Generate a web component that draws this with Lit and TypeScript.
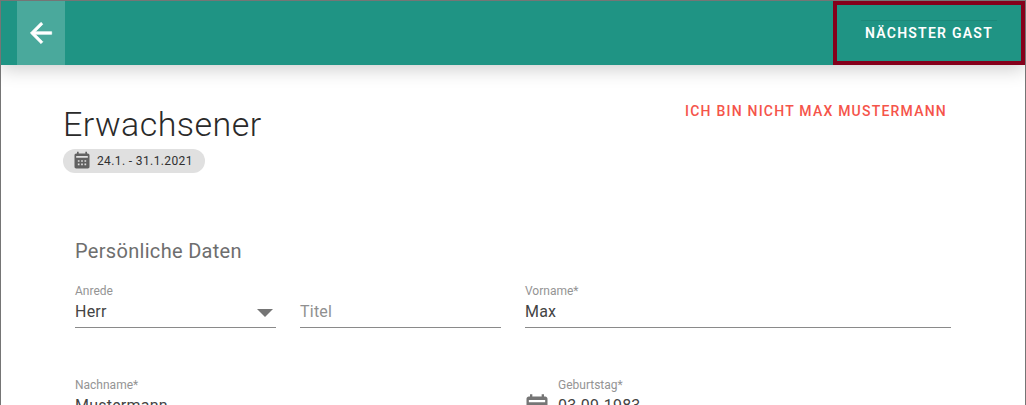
import { LitElement, html, css } from "lit";
import { customElement } from "lit/decorators.js";

@customElement("app-root")
export class AppRoot extends LitElement {
  static styles = css`
    :host { display: block; height: 405px; overflow: hidden; font-family: Roboto, sans-serif; background: #fff; }
    .frame { box-sizing: border-box; height: 405px; border: 1px solid #757575; border-bottom: none; overflow: hidden; }
    .bar { display: flex; justify-content: space-between; height: 64px; background: #1f9484; box-shadow: 0 4px 18px rgba(0,0,0,.2); padding-left: 16px; }
    .back { width: 48px; background: #4aa99c; display: flex; align-items: center; justify-content: center; }
    .next { box-sizing: border-box; width: 192px; height: 64px; border: 4px solid #85001b; display: flex; align-items: center; justify-content: center; color: #fff; font-size: 14px; font-weight: 600; letter-spacing: 1.25px; }
    .next span { border-top: 1px solid rgba(0,0,0,.08); padding: 2px 4px 3px; line-height: 20px; }
    .main { padding: 0 75px 0 62px; }
    .head { display: flex; justify-content: space-between; align-items: flex-start; padding-top: 36px; }
    h1 { margin: 0; font-size: 34px; font-weight: 350; line-height: 46px; color: #2a2a2a; letter-spacing: .45px; }
    .notme { color: #f5544a; font-size: 14px; font-weight: 470; letter-spacing: 1.22px; line-height: 20px; margin: 0 3px 0 0; }
    .chip { display: inline-flex; align-items: center; gap: 5px; height: 24px; padding: 0 12px 0 9px; border-radius: 12px; background: #e0e0e0; font-size: 12px; font-weight: 380; letter-spacing: .38px; color: #303030; margin-top: 2px; }
    .chip svg { width: 20px; height: 20px; fill: #616161; }
    .section { padding: 0 12px; margin-top: 63px; }
    h2 { margin: 0; font-size: 20px; font-weight: 400; line-height: 26px; color: #6e6e6e; letter-spacing: .31px; }
    .grid { display: grid; grid-template-columns: 201px 201px 426px; column-gap: 24px; margin-top: 19px; }
    .grid2 { display: grid; grid-template-columns: 426px 426px; column-gap: 24px; margin-top: 49px; }
    .field { border-bottom: 1px solid #8a8a8a; height: 44px; }
    .label { font-size: 12px; line-height: 16px; color: #949494; }
    .val { font-size: 16px; font-weight: 380; line-height: 24px; margin-top: 1px; color: #444; letter-spacing: .22px; }
    .ph { color: #909090; margin-top: 0; padding-top: 17px; }
    .sel { display: flex; justify-content: space-between; align-items: center; }
    .arrow { width: 0; height: 0; border-left: 8px solid transparent; border-right: 8px solid transparent; border-top: 8px solid #757575; margin: 2px 3px 0 0; }
    .date { display: flex; gap: 7px; align-items: flex-start; }
    .date svg { width: 28px; height: 28px; fill: #757575; margin: 16px 0 0 -2px; flex: none; }
    .date .field { flex: 1; }
  `;

  private cal() {
    return html`<svg viewBox="0 0 24 24"><path d="M19 3h-1V1h-2v2H8V1H6v2H5c-1.1 0-2 .9-2 2v14c0 1.1.9 2 2 2h14c1.1 0 2-.9 2-2V5c0-1.1-.9-2-2-2zM9 17H7v-2h2v2zm0-4H7v-2h2v2zm4 4h-2v-2h2v2zm0-4h-2v-2h2v2zm4 4h-2v-2h2v2zm0-4h-2v-2h2v2zm2-5H5V6h14v2z"/></svg>`;
  }

  render() {
    return html`<div class="frame">
      <div class="bar">
        <div class="back"><svg width="32" height="32" viewBox="0 0 24 24" fill="#fff"><path d="M20 11H7.83l5.59-5.59L12 4l-8 8 8 8 1.41-1.41L7.83 13H20z" stroke="#fff" stroke-width=".5"/></svg></div>
        <div class="next"><span>NÄCHSTER GAST</span></div>
      </div>
      <div class="main">
        <div class="head">
          <div>
            <h1>Erwachsener</h1>
            <div class="chip">${this.cal()}<span>24.1. - 31.1.2021</span></div>
          </div>
          <div class="notme">ICH BIN NICHT MAX MUSTERMANN</div>
        </div>
        <div class="section">
          <h2>Persönliche Daten</h2>
          <div class="grid">
            <div class="field"><div class="label">Anrede</div><div class="val sel"><span>Herr</span><span class="arrow"></span></div></div>
            <div class="field"><div class="val ph">Titel</div></div>
            <div class="field"><div class="label">Vorname*</div><div class="val">Max</div></div>
          </div>
          <div class="grid2">
            <div class="field"><div class="label">Nachname*</div><div class="val">Mustermann</div></div>
            <div class="date">${this.cal()}<div class="field"><div class="label">Geburtstag*</div><div class="val">03.09.1983</div></div></div>
          </div>
        </div>
      </div>
    </div>`;
  }
}
